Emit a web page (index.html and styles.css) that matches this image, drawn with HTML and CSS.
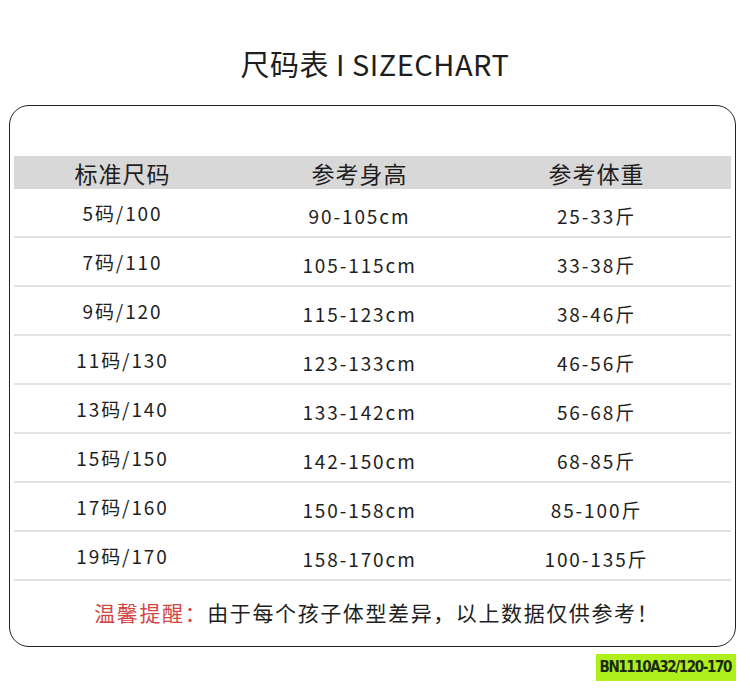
FILE: index.html
```html
<!DOCTYPE html>
<html lang="zh-CN">
<head>
<meta charset="utf-8">
<title>尺码表</title>
<link rel="stylesheet" href="styles.css">
</head>
<body>
<div class="page">
  <h1 class="title">尺码表 I SIZECHART</h1>
  <div class="card">
    <div class="row head">
      <span>标准尺码</span><span>参考身高</span><span>参考体重</span>
    </div>
    <div class="row"><span class="c1">5码/100</span><span>90-105cm</span><span>25-33斤</span></div>
    <div class="row"><span class="c1">7码/110</span><span>105-115cm</span><span>33-38斤</span></div>
    <div class="row"><span class="c1">9码/120</span><span>115-123cm</span><span>38-46斤</span></div>
    <div class="row"><span class="c1">11码/130</span><span>123-133cm</span><span>46-56斤</span></div>
    <div class="row"><span class="c1">13码/140</span><span>133-142cm</span><span>56-68斤</span></div>
    <div class="row"><span class="c1">15码/150</span><span>142-150cm</span><span>68-85斤</span></div>
    <div class="row"><span class="c1">17码/160</span><span>150-158cm</span><span>85-100斤</span></div>
    <div class="row"><span class="c1">19码/170</span><span>158-170cm</span><span>100-135斤</span></div>
    <p class="note"><span class="warn">温馨提醒：</span>由于每个孩子体型差异，以上数据仅供参考！</p>
  </div>
  <div class="badge-line"><span class="badge">BN1110A32/120-170</span></div>
</div>
</body>
</html>
```
FILE: styles.css
```css
html, body {
  margin: 0;
  padding: 0;
  background: #fff;
}
body {
  width: 750px;
  height: 697px;
  overflow: hidden;
  font-family: "Noto Sans CJK SC", "Noto Sans", sans-serif;
  color: #1e1e1e;
}
.page {
  display: flex;
  flex-direction: column;
}
.title {
  margin: 0;
  height: 105px;
  box-sizing: border-box;
  padding-top: 43px;
  font-size: 29px;
  line-height: 40px;
  font-weight: 400;
  text-align: center;
  letter-spacing: 0.5px;
}
.card {
  margin-left: 9px;
  width: 727px;
  height: 542px;
  box-sizing: border-box;
  border: 1.5px solid #222;
  border-radius: 20px;
  padding: 49.5px 4px 0 3.5px;
  display: flex;
  flex-direction: column;
}
.row {
  display: grid;
  grid-template-columns: 218px 256px 218px;
  align-items: center;
  justify-items: center;
  height: 49px;
  box-sizing: border-box;
  border-bottom: 2px solid #e2e2e2;
  font-size: 19px;
  letter-spacing: 1.9px;
}
.row span {
  position: relative;
  top: 3px;
}
.row .c1 {
  top: 0;
}
.row.head {
  height: 33px;
  background: #d8d8d8;
  border-bottom: 0;
  font-size: 23px;
  letter-spacing: 1px;
}
.row.head span {
  top: 0;
}
.note {
  margin: 0;
  flex: 1;
  display: flex;
  align-items: center;
  justify-content: center;
  padding-bottom: 2px;
  font-size: 21px;
  letter-spacing: 1.6px;
  padding-left: 9px;
}
.warn {
  color: #d34545;
}
.badge-line {
  display: flex;
  justify-content: flex-end;
  padding: 7px 14px 0 0;
}
.badge {
  background: #aef01c;
  font-family: "DejaVu Sans Condensed", "DejaVu Sans", sans-serif;
  font-stretch: condensed;
  font-size: 15px;
  font-weight: 700;
  letter-spacing: -1.4px;
  line-height: 27px;
  padding: 0 5px 0 4px;
  color: #1a2a10;
}
```
